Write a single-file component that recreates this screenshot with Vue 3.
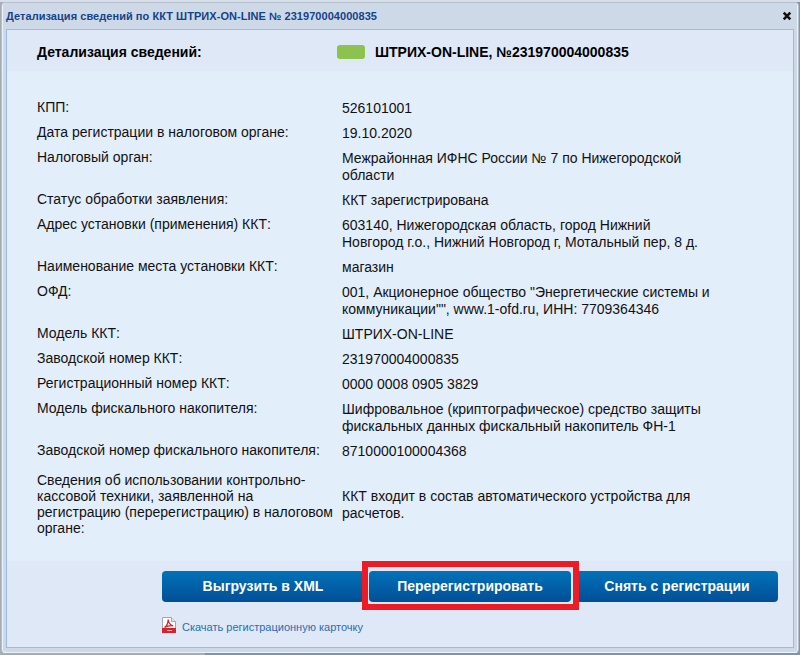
<script setup>
const rows = [
  { label: 'КПП:', value: '526101001' },
  { label: 'Дата регистрации в налоговом органе:', value: '19.10.2020' },
  { label: 'Налоговый орган:', value: 'Межрайонная ИФНС России № 7 по Нижегородской области' },
  { label: 'Статус обработки заявления:', value: 'ККТ зарегистрирована' },
  { label: 'Адрес установки (применения) ККТ:', value: '603140, Нижегородская область, город Нижний Новгород г.о., Нижний Новгород г, Мотальный пер, 8 д.' },
  { label: 'Наименование места установки ККТ:', value: 'магазин' },
  { label: 'ОФД:', value: '001, Акционерное общество "Энергетические системы и коммуникации"", www.1-ofd.ru, ИНН: 7709364346' },
  { label: 'Модель ККТ:', value: 'ШТРИХ-ON-LINE' },
  { label: 'Заводской номер ККТ:', value: '231970004000835' },
  { label: 'Регистрационный номер ККТ:', value: '0000 0008 0905 3829' },
  { label: 'Модель фискального накопителя:', value: 'Шифровальное (криптографическое) средство защиты фискальных данных фискальный накопитель ФН-1' },
  { label: 'Заводской номер фискального накопителя:', value: '8710000100004368' },
]
const lastRow = {
  label: 'Сведения об использовании контрольно-кассовой техники, заявленной на регистрацию (перерегистрацию) в налоговом органе:',
  value: 'ККТ входит в состав автоматического устройства для расчетов.',
}
</script>

<template>
  <div class="page">
    <div class="top-strip"></div>
    <div class="window">
      <div class="titlebar">
        <span class="title">Детализация сведений по ККТ ШТРИХ-ON-LINE № 231970004000835</span>
        <svg class="close" width="10" height="10" viewBox="0 0 10 10">
          <path d="M1.700 1.700l6.600 6.600M8.300 1.700l-6.600 6.600" stroke="#111" stroke-width="2.600" fill="none" />
        </svg>
      </div>
      <div class="panel">
        <div class="head">
          <div class="head-label">Детализация сведений:</div>
          <div class="head-value"><span class="pill"></span>ШТРИХ-ON-LINE, №231970004000835</div>
        </div>
        <div class="body">
          <div class="grid">
            <template v-for="r in rows" :key="r.label">
              <div class="cell-label">{{ r.label }}</div>
              <div class="cell-value">{{ r.value }}</div>
            </template>
            <div class="cell-label last">{{ lastRow.label }}</div>
            <div class="cell-value last">{{ lastRow.value }}</div>
          </div>
        </div>
        <div class="foot">
          <div class="buttons">
            <button class="btn">Выгрузить в XML</button>
            <button class="btn btn-marked">Перерегистрировать</button>
            <button class="btn">Снять с регистрации</button>
          </div>
          <a class="card-link">
            <svg width="14" height="16" viewBox="0 0 14 16">
              <path d="M0.5 0.5h9l4 4v11h-13z" fill="#fff" stroke="#a8a8a8" />
              <path d="M9.5 0.5v4h4" fill="#e6e6e6" stroke="#a8a8a8" />
              <path d="M2.500 10.500c2-1.200 3.500-4 3.700-8 .2 3 1.800 5.500 5 6.300-3-.3-6 .2-8.700 1.700z" fill="none" stroke="#d6222a" stroke-width="1.300" />
              <rect x="0" y="11" width="14" height="5" fill="#d6222a" />
              <rect x="5" y="13" width="5" height="1" fill="#f3b5b5" />
            </svg>
            <span>Скачать регистрационную карточку</span>
          </a>
        </div>
      </div>
    </div>
  </div>
</template>

<style>
html, body { margin: 0; padding: 0; background: #c9d3df; }
</style>

<style scoped>
.page {
  width: 800px;
  height: 655px;
  overflow: hidden;
  background: linear-gradient(90deg, #a3adb8 205px, #7f95a7 205px);
  font-family: "Liberation Sans", Arial, sans-serif;
}
.top-strip {
  height: 2px;
  background: #d6dfea;
}
.window {
  width: 798px;
  height: 651px;
  margin-left: 1px;
  box-sizing: border-box;
  padding: 0 4px;
  background: #ced9e7;
  border: 1px solid #b5bfcb;
  border-bottom: 1px solid #eef2f7;
  border-radius: 4px;
  box-shadow: inset 1px 0 0 #eef2f7, inset -1px 0 0 #eef2f7;
}
.titlebar {
  height: 26px;
  display: flex;
  align-items: center;
  justify-content: space-between;
}
.title {
  font-size: 11px;
  font-weight: 700;
  letter-spacing: 0.05px;
  color: #15428b;
}
.close {
  margin-right: 2px;
}
.panel {
  border: 1px solid #99bbe8;
  height: 619px;
  box-sizing: border-box;
  display: flex;
  flex-direction: column;
  background: #e3eefb;
}
.head {
  height: 41px;
  flex: none;
  box-sizing: border-box;
  background: #dfe8f6;
  display: flex;
  align-items: center;
  font-size: 14px;
  font-weight: 700;
  color: #000;
  padding: 3px 0 0 30px;
}
.head-label {
  width: 300px;
}
.head-value {
  display: flex;
  align-items: center;
}
.pill {
  width: 28px;
  height: 14px;
  border-radius: 3px;
  background: #8cc34e;
  margin-right: 10px;
}
.body {
  flex: 1;
  padding: 29px 0 0 30px;
}
.grid {
  display: grid;
  grid-template-columns: 305px 370px;
  row-gap: 8px;
  font-size: 14px;
  line-height: 17px;
  color: #111;
}
.cell-label {
  margin-top: -1px;
}
.cell-label.last {
  line-height: 16px;
  width: 300px;
  margin-top: 4px;
}
.cell-value.last {
  align-self: center;
  margin-top: 6px;
}
.foot {
  height: 86px;
  flex: none;
  background: #dfe8f6;
  padding: 10px 0 0 155px;
  box-sizing: border-box;
}
.buttons {
  display: flex;
  gap: 5px;
}
.btn {
  width: 202px;
  height: 31px;
  border: 0;
  padding: 0 0 2px;
  border-radius: 4px;
  background: linear-gradient(#0272b9, #014f96);
  color: #fff;
  font-family: inherit;
  font-size: 14px;
  font-weight: 700;
}
.btn-marked {
  position: relative;
  z-index: 1;
}
.btn-marked::after {
  content: "";
  position: absolute;
  left: -7px;
  top: -10px;
  right: -8px;
  bottom: -8px;
  border: 6px solid #ed1c24;
  pointer-events: none;
}
.card-link {
  display: flex;
  align-items: flex-start;
  gap: 6px;
  margin-top: 15px;
  font-size: 11px;
  color: #2a6db0;
}
.card-link span {
  margin-top: 4px;
}
</style>
